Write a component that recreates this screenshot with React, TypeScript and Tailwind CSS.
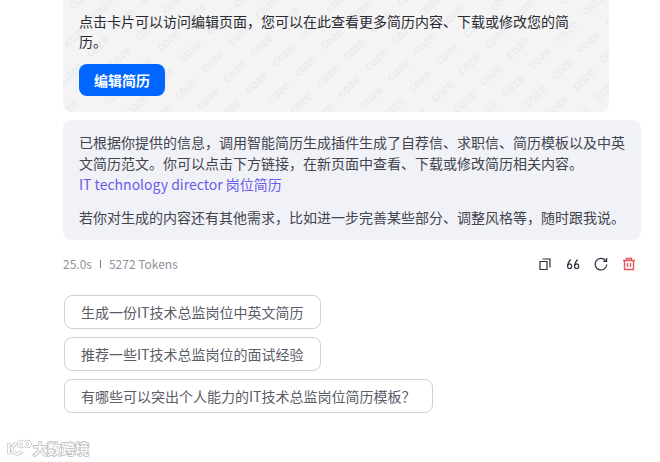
import { ReactNode } from 'react';

const suggestions = [
  '生成一份IT技术总监岗位中英文简历',
  '推荐一些IT技术总监岗位的面试经验',
  '有哪些可以突出个人能力的IT技术总监岗位简历模板？',
];

// Watermark words sit on a slanted lattice: one step down the column, one step along the word
const watermarks = Array.from({ length: 60 }, (_, row) =>
  Array.from({ length: 44 }, (_, col) => ({
    x: 106 + (row - 20) * 22 + (col - 20) * 26.8,
    y: 41 + (row - 20) * 10.5 - (col - 20) * 27,
  }))
)
  .flat()
  .filter((p) => p.x > -8 && p.x < 554 && p.y > -8 && p.y < 120);

function Watermark() {
  return (
    <svg
      className="absolute inset-0 h-full w-full select-none"
      fill="#ebebee"
      fontFamily="Lato, sans-serif"
      fontSize="13"
      fontWeight="700"
      textAnchor="middle"
      aria-hidden="true"
    >
      {watermarks.map((p) => (
        <text key={`${p.x}-${p.y}`} transform={`translate(${p.x} ${p.y}) rotate(-42)`} dy="3">
          coze
        </text>
      ))}
    </svg>
  );
}

interface IconButtonProps {
  label: string;
  className?: string;
  children: ReactNode;
}

function IconButton({ label, className = 'text-[#2b2f3a]', children }: IconButtonProps) {
  return (
    <button type="button" aria-label={label} className={`flex size-6 items-center justify-center ${className}`}>
      <svg viewBox="0 0 14 14" className="size-3.5" fill="none" stroke="currentColor" strokeWidth="1.2">
        {children}
      </svg>
    </button>
  );
}

export default function App() {
  return (
    <main className="bg-white pr-[19px] pl-[63px] font-['Noto_Sans_CJK_SC',sans-serif] text-sm">
      {/* Resume card */}
      <section className="relative mr-8 overflow-hidden rounded-b-lg bg-[#f4f4f5] px-4 pt-[11px] pb-4">
        <Watermark />
        <div className="relative">
          <p className="leading-5 text-[#2a2b31]">
            点击卡片可以访问编辑页面，您可以在此查看更多简历内容、下载或修改您的简历。
          </p>
          <button type="button" className="mt-[13px] block h-8 rounded-lg bg-[#0066ff] px-[15px] font-bold text-white">
            编辑简历
          </button>
        </div>
      </section>

      {/* Bot reply */}
      <section className="mt-2 space-y-3 rounded-lg bg-[#f1f2f8] px-4 py-3 leading-[21px] text-[#42444d]">
        <p>
          已根据你提供的信息，调用智能简历生成插件生成了自荐信、求职信、简历模板以及中英文简历范文。你可以点击下方链接，在新页面中查看、下载或修改简历相关内容。
          <br />
          <a href="#resume" className="text-[#6a5be6]">
            IT technology director 岗位简历
          </a>
        </p>
        <p>若你对生成的内容还有其他需求，比如进一步完善某些部分、调整风格等，随时跟我说。</p>
      </section>

      {/* Usage and actions */}
      <div className="mt-3 flex h-6 items-center justify-between">
        <div className="flex items-center gap-2 text-xs text-[#8f919c]">
          <span>25.0s</span>
          <span className="h-2 w-px bg-[#73757f]" />
          <span>5272 Tokens</span>
        </div>
        <div className="flex gap-1">
          <IconButton label="复制">
            <path d="M2 4.500h7v8H2zM4.500 2h7.500v8.500" />
          </IconButton>
          <IconButton label="引用">
            <path d="M4.600 2.500C2.600 4.500 1.500 6.500 1.500 9M11.600 2.500C9.600 4.500 8.500 6.500 8.500 9" />
            <ellipse cx="3.600" cy="9.200" rx="2.100" ry="2.300" />
            <ellipse cx="10.600" cy="9.200" rx="2.100" ry="2.300" />
          </IconButton>
          <IconButton label="重新生成">
            <path d="M12.800 7.500A5.800 5.800 0 1 1 11.500 3.500M12.600 1v3.300H9.300" />
          </IconButton>
          <IconButton label="删除" className="text-[#e5555b]">
            <path d="M1 3.500h12M4.500 3.500V1.500h5v2M2.500 3.500v9h9v-9M5.500 6v4M8.500 6v4" strokeWidth="1.4" />
          </IconButton>
        </div>
      </div>

      {/* Suggested questions */}
      <div className="mt-[19px] flex flex-col items-start gap-2 pl-px">
        {suggestions.map((text) => (
          <button
            key={text}
            type="button"
            className="min-h-[34px] rounded-lg border border-[#cfd1d9] px-4 text-left text-[#5a5c67]"
          >
            {text}
          </button>
        ))}
      </div>

      {/* Site mark */}
      <div className="absolute bottom-1 left-1.5 flex items-center">
        <svg width="27" height="20" viewBox="0 0 27 20" fill="none" aria-hidden="true">
          <g stroke="#c4c4c4" strokeWidth="3.400">
            <path d="M3 5v11.500M10 5L6 9.500c0 7 7 8 10 3.500" />
            <circle cx="15" cy="6" r="2.600" />
            <circle cx="21.500" cy="6" r="2.600" />
          </g>
          <g stroke="#fff" strokeWidth="1.700">
            <path d="M3 5.500v10.500M10 5L6 9.500c0 7 7 8 10 3.500" />
            <circle cx="15" cy="6" r="2.600" />
            <circle cx="21.500" cy="6" r="2.600" />
          </g>
        </svg>
        <span className="text-sm leading-4 font-medium text-white [-webkit-text-stroke:2px_#c4c4c4] [paint-order:stroke_fill]">
          大数跨境
        </span>
      </div>
    </main>
  );
}
